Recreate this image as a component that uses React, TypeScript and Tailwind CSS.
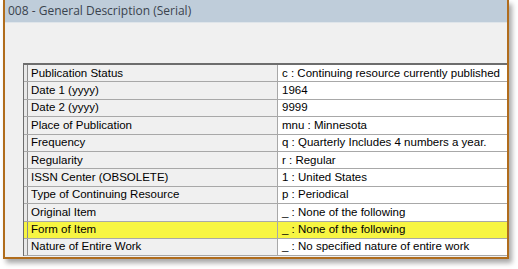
const rows: [string, string][] = [
  ["Publication Status", "c : Continuing resource currently published"],
  ["Date 1 (yyyy)", "1964"],
  ["Date 2 (yyyy)", "9999"],
  ["Place of Publication", "mnu : Minnesota"],
  ["Frequency", "q : Quarterly Includes 4 numbers a year."],
  ["Regularity", "r : Regular"],
  ["ISSN Center (OBSOLETE)", "1 : United States"],
  ["Type of Continuing Resource", "p : Periodical"],
  ["Original Item", "_ : None of the following"],
  ["Form of Item", "_ : None of the following"],
  ["Nature of Entire Work", "_ : No specified nature of entire work"],
];

const highlighted = "Form of Item";

export default function App() {
  return (
    <div className="h-[269px] w-[518px] overflow-hidden bg-white pl-[3px]">
      <div className="flex h-[259px] w-[506px] flex-col overflow-hidden border-x-2 border-b-2 border-[#b06c1c] bg-[#f0f0f0] shadow-[3px_4px_5px_rgba(0,0,0,0.35)]">
        <div className="flex h-[23px] shrink-0 items-center border-b border-[#dfe5ea] bg-[#bfcdda] pl-[3px] font-['Open_Sans',sans-serif] text-[12px] text-[#3a434e]">
          008 - General Description (Serial)
        </div>
        <div className="flex-1 pl-[18px] pt-[40px]">
          <div className="w-[520px] border-l border-t-2 border-[#6d6d6d] font-['Liberation_Sans',Arial,sans-serif] text-[11.5px] text-black">
            {rows.map(([label, value]) => {
              const on = label === highlighted;
              return (
                <div key={label} className={`flex h-[17.4px] border-b border-[#a8a8a8] ${on ? "bg-[#f7f542]" : ""}`}>
                  <div className={`w-[4px] shrink-0 border-r border-[#8c8c8c] ${on ? "" : "bg-[#e8e8e8]"}`} />
                  <div className={`flex w-[250px] shrink-0 items-center border-r border-[#a8a8a8] pl-[3px] ${on ? "" : "bg-[#f0f0f0]"}`}>
                    {label}
                  </div>
                  <div className={`flex flex-1 items-center pl-[4px] ${on ? "" : "bg-white"}`}>{value}</div>
                </div>
              );
            })}
          </div>
        </div>
      </div>
    </div>
  );
}
